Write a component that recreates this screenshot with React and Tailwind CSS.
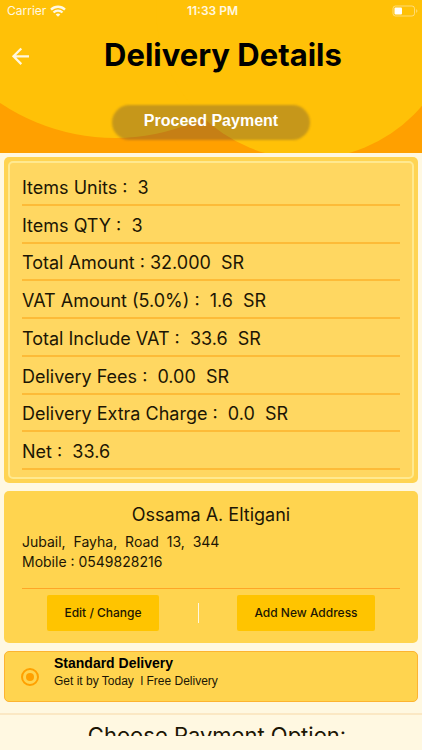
import React, { useState } from 'react';

const summary = [
  'Items Units :  3',
  'Items QTY :  3',
  'Total Amount : 32.000  SR',
  'VAT Amount (5.0%) :  1.6  SR',
  'Total Include VAT :  33.6  SR',
  'Delivery Fees :  0.00  SR',
  'Delivery Extra Charge :  0.0  SR',
  'Net :  33.6',
];

function StatusBar() {
  return (
    <div className="grid grid-cols-3 items-center h-[22px] pl-[7px] pr-1 text-xs text-[#fff8e1]">
      <div className="flex items-center gap-1">
        <span>Carrier</span>
        <svg width="16" height="12" viewBox="0 0 16 12" fill="none" stroke="currentColor" strokeWidth="2.3">
          <path d="M1 4.600a10 10 0 0 1 14 0" />
          <path d="M3.500 7.500a6.300 6.300 0 0 1 9 0" />
          <path d="M8 11.800 5.700 9.500a3.300 3.300 0 0 1 4.600 0z" fill="currentColor" stroke="none" />
        </svg>
      </div>
      <span className="text-center font-semibold">11:33 PM</span>
      <svg className="justify-self-end" width="26" height="12" viewBox="0 0 26 12" fill="none">
        <rect x="1" y="1" width="21.5" height="10" rx="2.5" stroke="#fff8e1" strokeOpacity="0.5" />
        <rect x="2.500" y="2.500" width="7.500" height="7" rx="1" fill="#fff" />
        <path d="M24.2 4.2v3.6c.8-.3 1.2-1 1.2-1.8s-.4-1.500-1.200-1.800z" fill="#fff8e1" fillOpacity="0.5" />
      </svg>
    </div>
  );
}

function Header() {
  return (
    <header className="relative overflow-hidden h-[153px] shrink-0 bg-[#ffa000]">
      {/* Decorative circles */}
      <svg className="absolute inset-0 w-full h-full" viewBox="0 0 422 153" preserveAspectRatio="none" fill="#ffc107">
        <rect width="422" height="90" />
        <circle cx="115" cy="-68" r="206" />
        <circle cx="307" cy="8" r="151" />
      </svg>

      <div className="relative">
        <StatusBar />
        <div className="flex items-center h-[68px] px-[11px]">
          <button type="button" aria-label="Back" className="w-5 text-[#fff8e1]">
            <svg width="20" height="20" viewBox="0 0 20 20" fill="none" stroke="currentColor" strokeWidth="2.3">
              <path d="M18 10.300H2.500M10.300 2.500 2.500 10.300l7.800 7.800" />
            </svg>
          </button>
          <h1 className="flex-1 pl-1 pb-0.5 text-center text-[31px] font-bold text-black">Delivery Details</h1>
        </div>
        <button
          type="button"
          className="relative block mx-auto mt-[15px] w-[198px] h-[35px] text-base font-bold text-white font-['Liberation_Sans',sans-serif]"
        >
          <span className="absolute inset-0 rounded-full bg-[#1a1a55]/25 blur-[1px]" />
          <span className="relative block -mt-1">Proceed Payment</span>
        </button>
      </div>
    </header>
  );
}

function Summary() {
  return (
    <section className="p-1 rounded-[5px] bg-[#ffd452]">
      <div className="px-3 pt-[5px] pb-[7px] rounded-[5px] border-2 border-[#ffe990] bg-[#ffd761]">
        <ul className="grid grid-rows-8 h-[302px]">
          {summary.map((line) => (
            <li key={line} className="flex items-center pt-1 border-b-2 border-[#fdbb38] text-lg leading-6 whitespace-pre">
              {line}
            </li>
          ))}
        </ul>
      </div>
    </section>
  );
}

function Address() {
  return (
    <section className="px-[18px] py-3 rounded-[5px] bg-[#ffd44f]">
      <h2 className="text-center text-lg leading-6">Ossama A. Eltigani</h2>
      <p className="mt-[5px] text-sm leading-5 whitespace-pre">Jubail,  Fayha,  Road  13,  344</p>
      <p className="text-sm leading-5">Mobile : 0549828216</p>
      <hr className="mt-4 border-[#ffa526]" />
      <div className="flex items-center justify-between mt-1.5 px-[25px] text-xs font-medium">
        <button type="button" className="w-28 h-9 rounded-[2px] bg-[#ffc400]">Edit / Change</button>
        <span className="w-px h-5 bg-[#fff8e1]" />
        <button type="button" className="w-[138px] h-9 rounded-[2px] bg-[#ffc400]">Add New Address</button>
      </div>
    </section>
  );
}

export default function App() {
  const [delivery, setDelivery] = useState('standard');

  return (
    <div className="flex flex-col h-screen pb-3.5 overflow-hidden bg-[#fff8e1] text-[#1c1604] font-['Inter',sans-serif]">
      <Header />
      <main className="flex-1 min-h-0 overflow-hidden">
        <div className="flex flex-col gap-2 px-1 pt-1">
          <Summary />
          <Address />
          <label className="flex items-center gap-[15px] h-[51px] px-4 rounded-[5px] border border-[#fdb431] bg-[#ffd44f] font-['Liberation_Sans',sans-serif]">
            <input
              type="radio"
              name="delivery"
              checked={delivery === 'standard'}
              onChange={() => setDelivery('standard')}
              className="appearance-none w-[18px] h-[18px] rounded-full border-2 border-[#ffa000] p-[3px] bg-clip-content checked:bg-[#ffa000]"
            />
            <span className="pb-2.5">
              <span className="block text-sm leading-[18px] font-bold text-black">Standard Delivery</span>
              <span className="block text-xs leading-[18px] whitespace-pre">Get it by Today  l Free Delivery</span>
            </span>
          </label>
        </div>
        <h2 className="mt-[11px] pl-3 pt-1 border-t-2 border-[#fbe8c4] text-center text-[22px] leading-8">Choose Payment Option:</h2>
      </main>
    </div>
  );
}
